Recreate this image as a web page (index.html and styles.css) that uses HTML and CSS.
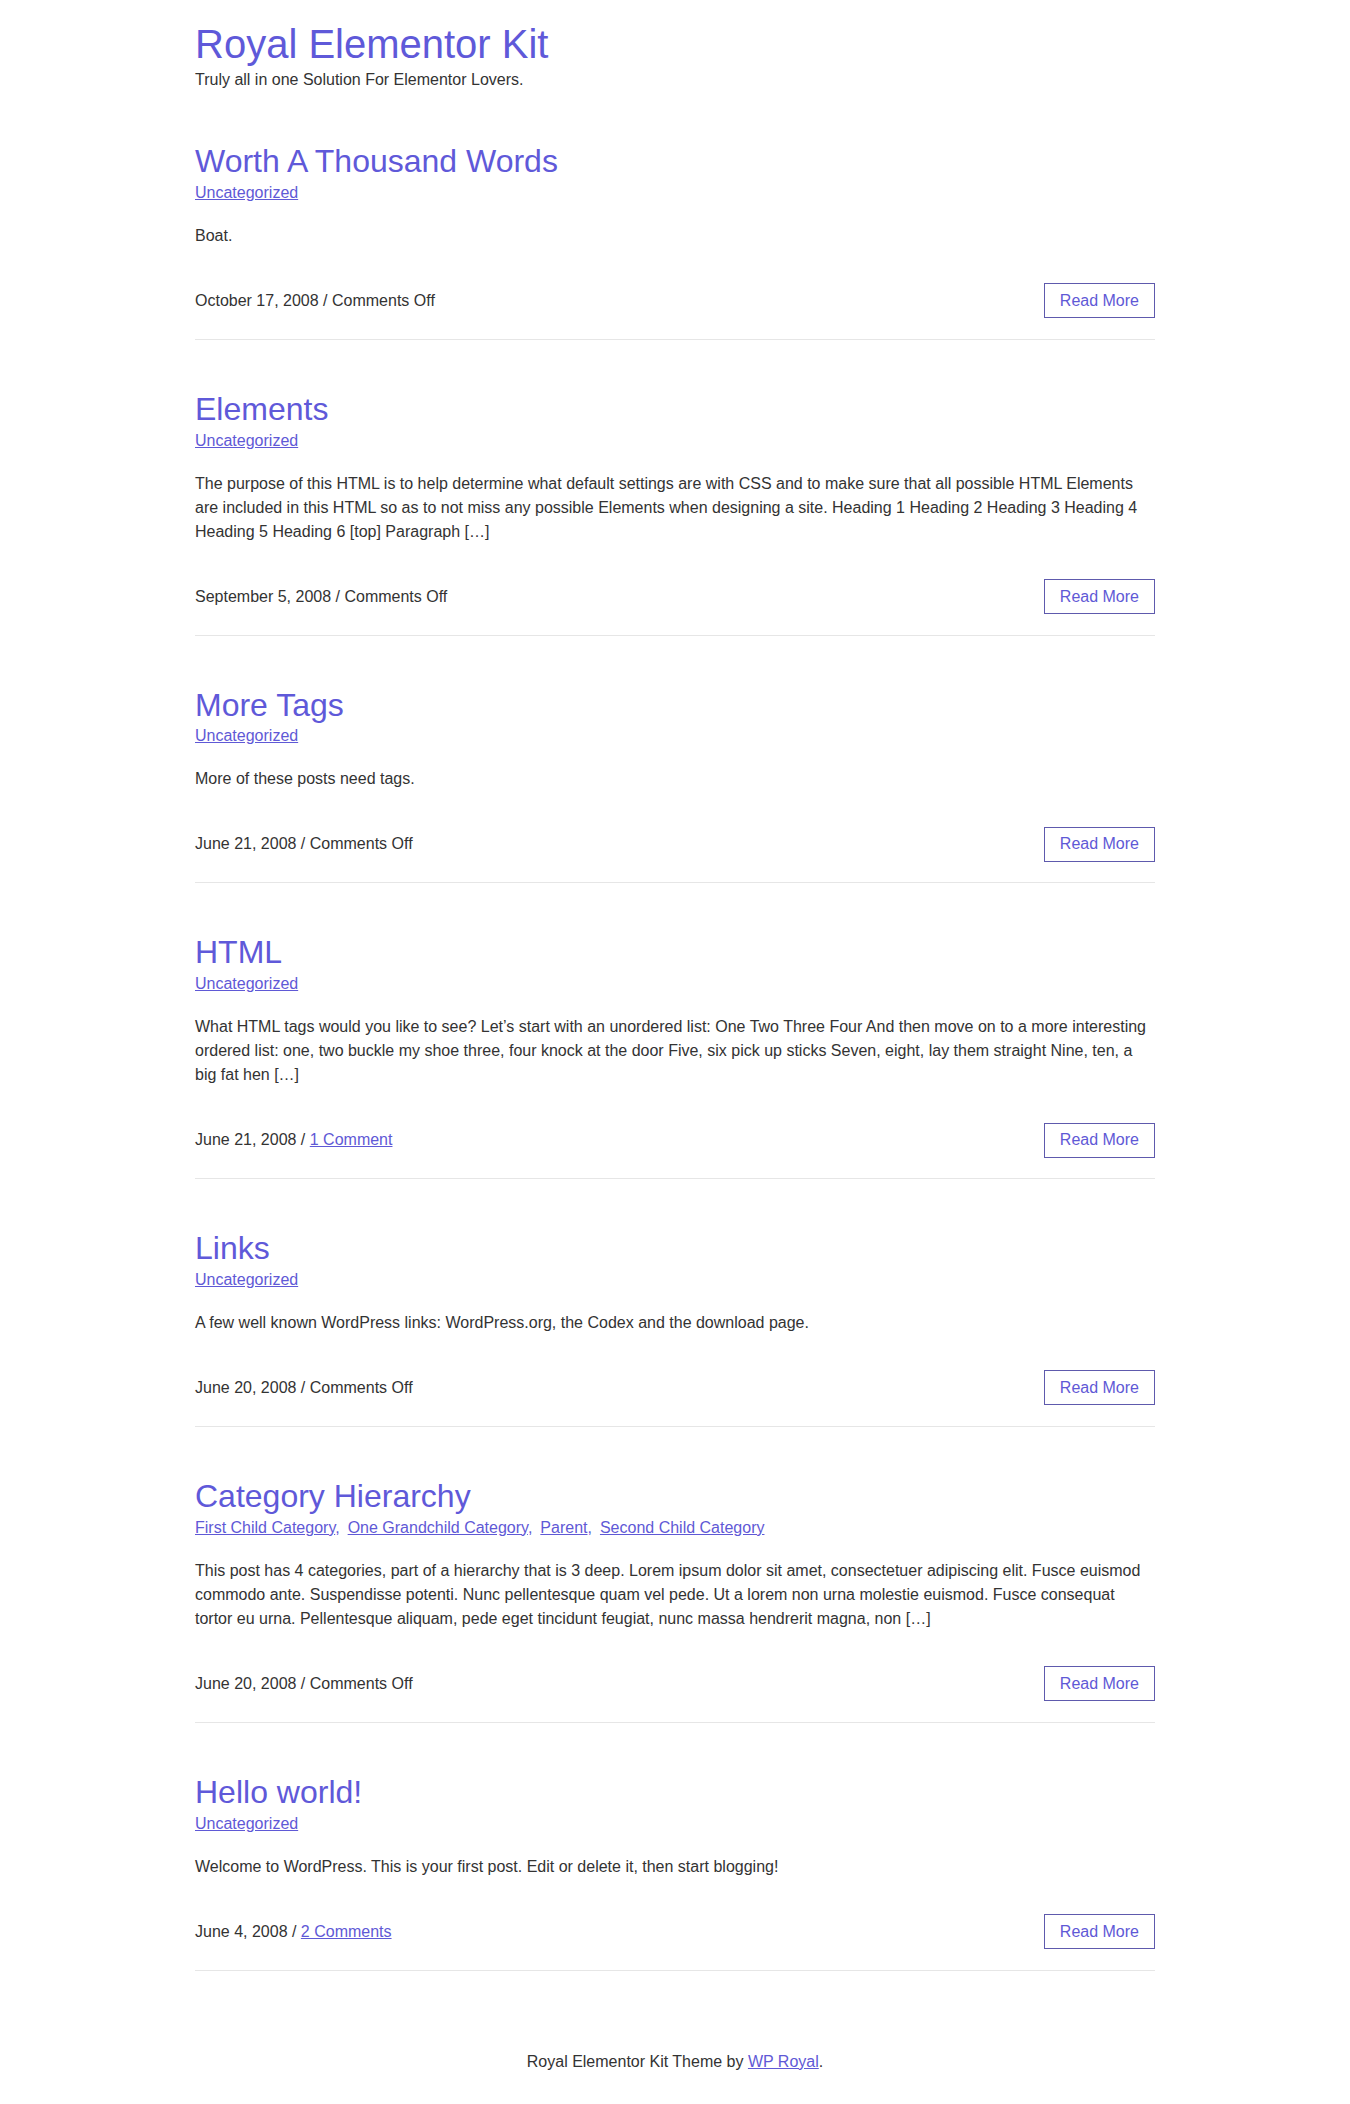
FILE: index.html
```html
<!DOCTYPE html>
<html lang="en">
<head>
<meta charset="utf-8">
<title>Royal Elementor Kit</title>
<link rel="stylesheet" href="styles.css">
</head>
<body>
<div class="page">
  <header class="site-header">
    <h1 class="site-title"><a href="#">Royal Elementor Kit</a></h1>
    <p class="site-tagline">Truly all in one Solution For Elementor Lovers.</p>
  </header>

  <main class="posts">
    <article class="post">
      <h2 class="post-title"><a href="#">Worth A Thousand Words</a></h2>
      <div class="post-cats"><a href="#">Uncategorized</a></div>
      <p class="post-excerpt">Boat.</p>
      <div class="post-footer">
        <span class="post-meta">October 17, 2008 / Comments Off</span>
        <a class="read-more" href="#">Read More</a>
      </div>
    </article>

    <article class="post">
      <h2 class="post-title"><a href="#">Elements</a></h2>
      <div class="post-cats"><a href="#">Uncategorized</a></div>
      <p class="post-excerpt">The purpose of this HTML is to help determine what default settings are with CSS and to make sure that all possible HTML Elements are included in this HTML so as to not miss any possible Elements when designing a site. Heading 1 Heading 2 Heading 3 Heading 4 Heading 5 Heading 6 [top] Paragraph […]</p>
      <div class="post-footer">
        <span class="post-meta">September 5, 2008 / Comments Off</span>
        <a class="read-more" href="#">Read More</a>
      </div>
    </article>

    <article class="post">
      <h2 class="post-title"><a href="#">More Tags</a></h2>
      <div class="post-cats"><a href="#">Uncategorized</a></div>
      <p class="post-excerpt">More of these posts need tags.</p>
      <div class="post-footer">
        <span class="post-meta">June 21, 2008 / Comments Off</span>
        <a class="read-more" href="#">Read More</a>
      </div>
    </article>

    <article class="post">
      <h2 class="post-title"><a href="#">HTML</a></h2>
      <div class="post-cats"><a href="#">Uncategorized</a></div>
      <p class="post-excerpt">What HTML tags would you like to see? Let’s start with an unordered list: One Two Three Four And then move on to a more interesting ordered list: one, two buckle my shoe three, four knock at the door Five, six pick up sticks Seven, eight, lay them straight Nine, ten, a big fat hen […]</p>
      <div class="post-footer">
        <span class="post-meta">June 21, 2008 / <a href="#">1 Comment</a></span>
        <a class="read-more" href="#">Read More</a>
      </div>
    </article>

    <article class="post">
      <h2 class="post-title"><a href="#">Links</a></h2>
      <div class="post-cats"><a href="#">Uncategorized</a></div>
      <p class="post-excerpt">A few well known WordPress links: WordPress.org, the Codex and the download page.</p>
      <div class="post-footer">
        <span class="post-meta">June 20, 2008 / Comments Off</span>
        <a class="read-more" href="#">Read More</a>
      </div>
    </article>

    <article class="post">
      <h2 class="post-title"><a href="#">Category Hierarchy</a></h2>
      <div class="post-cats"><a href="#">First Child Category</a><span class="sep">,</span><a href="#">One Grandchild Category</a><span class="sep">,</span><a href="#">Parent</a><span class="sep">,</span><a href="#">Second Child Category</a></div>
      <p class="post-excerpt">This post has 4 categories, part of a hierarchy that is 3 deep. Lorem ipsum dolor sit amet, consectetuer adipiscing elit. Fusce euismod commodo ante. Suspendisse potenti. Nunc pellentesque quam vel pede. Ut a lorem non urna molestie euismod. Fusce consequat tortor eu urna. Pellentesque aliquam, pede eget tincidunt feugiat, nunc massa hendrerit magna, non […]</p>
      <div class="post-footer">
        <span class="post-meta">June 20, 2008 / Comments Off</span>
        <a class="read-more" href="#">Read More</a>
      </div>
    </article>

    <article class="post">
      <h2 class="post-title"><a href="#">Hello world!</a></h2>
      <div class="post-cats"><a href="#">Uncategorized</a></div>
      <p class="post-excerpt">Welcome to WordPress. This is your first post. Edit or delete it, then start blogging!</p>
      <div class="post-footer">
        <span class="post-meta">June 4, 2008 / <a href="#">2 Comments</a></span>
        <a class="read-more" href="#">Read More</a>
      </div>
    </article>
  </main>

  <footer class="site-footer">
    <p>Royal Elementor Kit Theme by <a href="#">WP Royal</a>.</p>
  </footer>
</div>
</body>
</html>
```

FILE: styles.css
```css
* {
  box-sizing: border-box;
}

html, body {
  margin: 0;
  padding: 0;
  background: #ffffff;
}

body {
  font-family: "Liberation Sans", Arial, Helvetica, sans-serif;
  font-size: 16px;
  line-height: 24px;
  color: #333333;
}

a {
  color: #5f59d6;
}

.page {
  width: 960px;
  margin: 0 auto;
}

.site-header {
  padding-top: 20px;
}

.site-title {
  margin: 0;
  font-size: 40px;
  line-height: 48px;
  font-weight: 400;
}

.site-title a {
  color: #5f59d9;
  text-decoration: none;
}

.site-tagline {
  margin: 0;
  font-size: 16px;
  line-height: 24px;
  color: #333333;
}

.post {
  padding-top: 51px;
  padding-bottom: 20.5px;
  border-bottom: 1px solid #e6e6e6;
}

.post-title {
  margin: 0;
  font-size: 32px;
  line-height: 37.8px;
  font-weight: 400;
}

.post-title a {
  color: #5f59d9;
  text-decoration: none;
}

.post-cats {
  font-size: 16px;
  line-height: 24px;
}

.post-cats a {
  color: #5f59d6;
  text-decoration: underline;
}

.post-cats .sep {
  margin-right: 8px;
  color: #5f59d6;
}

.post-excerpt {
  margin: 19px 0 0;
  font-size: 16px;
  line-height: 24px;
  color: #333333;
}

.post-footer {
  margin-top: 35.5px;
  display: flex;
  align-items: center;
  justify-content: space-between;
}

.post-meta {
  font-size: 16px;
  line-height: 24px;
  color: #333333;
}

.post-meta a {
  color: #5f59d6;
}

.read-more {
  display: inline-flex;
  align-items: center;
  justify-content: center;
  height: 35px;
  padding: 0 15px;
  border: 1px solid #5e5aad;
  color: #5f59d6;
  font-size: 16px;
  text-decoration: none;
}

.site-footer {
  padding-top: 79px;
  padding-bottom: 31px;
  text-align: center;
}

.site-footer p {
  margin: 0;
  font-size: 16px;
  line-height: 24px;
  color: #333333;
}
```
